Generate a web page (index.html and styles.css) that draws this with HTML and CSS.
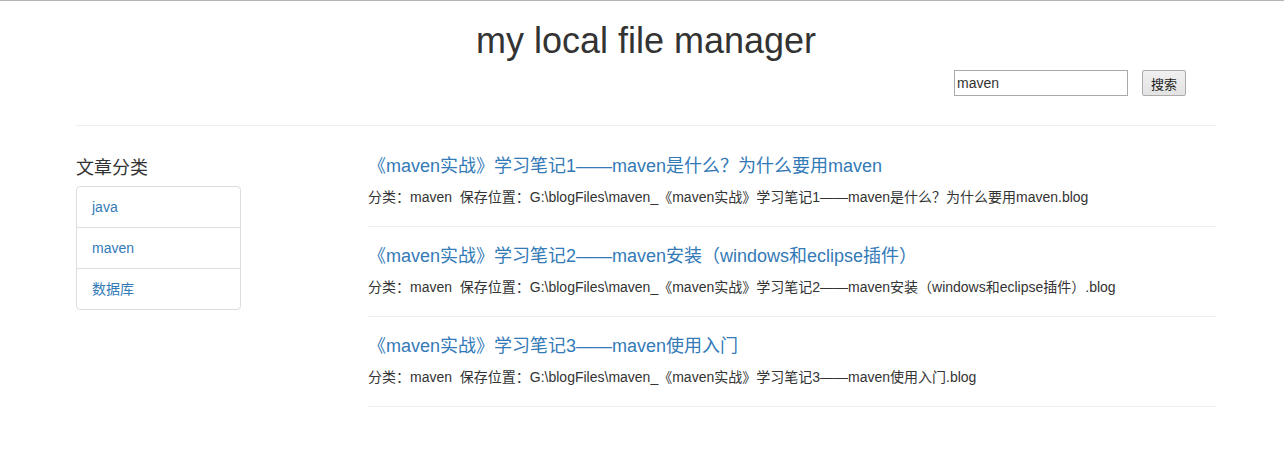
FILE: index.html
```html
<!DOCTYPE html>
<html lang="zh-CN">
<head>
<meta charset="utf-8">
<title>my local file manager</title>
<link rel="stylesheet" href="styles.css">
</head>
<body>
<div class="topline"></div>
<div class="container">
  <header class="header">
    <h1 class="site-title">my local file manager</h1>
    <form class="search">
      <input class="search-input" type="text" value="maven">
      <button class="search-btn" type="button">搜索</button>
    </form>
  </header>
  <hr class="divider">
  <div class="main">
    <aside class="sidebar">
      <h4 class="side-title">文章分类</h4>
      <ul class="list-group">
        <li class="list-item"><a href="#">java</a></li>
        <li class="list-item"><a href="#">maven</a></li>
        <li class="list-item"><a href="#">数据库</a></li>
      </ul>
    </aside>
    <section class="articles">
      <div class="article">
        <h4 class="article-title"><a href="#">《maven实战》学习笔记1——maven是什么？为什么要用maven</a></h4>
        <p class="meta">分类：maven&nbsp;&nbsp;保存位置：G:\blogFiles\maven_《maven实战》学习笔记1——maven是什么？为什么要用maven.blog</p>
      </div>
      <div class="article">
        <h4 class="article-title"><a href="#">《maven实战》学习笔记2——maven安装（windows和eclipse插件）</a></h4>
        <p class="meta">分类：maven&nbsp;&nbsp;保存位置：G:\blogFiles\maven_《maven实战》学习笔记2——maven安装（windows和eclipse插件）.blog</p>
      </div>
      <div class="article">
        <h4 class="article-title"><a href="#">《maven实战》学习笔记3——maven使用入门</a></h4>
        <p class="meta">分类：maven&nbsp;&nbsp;保存位置：G:\blogFiles\maven_《maven实战》学习笔记3——maven使用入门.blog</p>
      </div>
    </section>
  </div>
</div>
</body>
</html>
```

FILE: styles.css
```css
* { box-sizing: border-box; }
html, body {
  margin: 0;
  padding: 0;
  background: #fff;
}
body {
  font-family: "Liberation Sans", Arial, "Noto Sans CJK SC", sans-serif;
  font-size: 14px;
  line-height: 20px;
  color: #333;
}
a { color: #337ab7; text-decoration: none; }
.topline {
  height: 1px;
  background: #b4b4b4;
}
.container {
  width: 1140px;
  margin: 0 0 0 76px;
}
.header {
  display: flex;
  flex-direction: column;
}
.site-title {
  margin: 20px 0 9px;
  font-size: 36px;
  font-weight: 400;
  line-height: 40px;
  text-align: center;
  color: #333;
}
.search {
  display: flex;
  justify-content: flex-end;
  align-items: center;
  gap: 14px;
  padding-right: 30px;
  margin: 0;
}
.search-input {
  width: 174px;
  height: 26px;
  margin: 0;
  padding: 1px 2px;
  border: 1px solid #a9a9a9;
  border-radius: 0;
  font-family: "Liberation Sans", Arial, sans-serif;
  font-size: 14px;
  color: #333;
  background: #fff;
  outline: none;
}
.search-btn {
  width: 44px;
  height: 26px;
  margin: 0;
  padding: 0;
  border: 1px solid #acacac;
  border-radius: 2px;
  background: linear-gradient(#f0f0f0, #e3e3e3);
  font-family: "Noto Sans CJK SC", sans-serif;
  font-size: 13px;
  color: #222;
}
.divider {
  margin: 29px 0 0;
  border: 0;
  border-top: 1px solid #eee;
  height: 0;
}
.main {
  display: flex;
  padding-top: 11px;
}
.sidebar {
  width: 165px;
  margin-right: 127px;
  flex: none;
}
.side-title {
  margin: 19px 0 10px;
  font-size: 18px;
  font-weight: 400;
  line-height: 20px;
  color: #333;
  font-family: "Noto Sans CJK SC", sans-serif;
}
.list-group {
  list-style: none;
  margin: 0;
  padding: 0;
  border: 1px solid #ddd;
  border-radius: 4px;
}
.list-item {
  padding: 10px 15px;
  line-height: 20px;
  border-top: 1px solid #ddd;
}
.list-item:first-child { border-top: 0; }
.list-item a { color: #337ab7; font-size: 14px; }
.articles {
  width: 848px;
  flex: none;
}
.article {
  padding: 19px 0 19px;
  border-bottom: 1px solid #eee;
}
.article-title {
  margin: 0 0 11px;
  font-size: 18px;
  font-weight: 400;
  line-height: 20px;
}
.article-title a { color: #337ab7; }
.meta {
  margin: 0;
  font-size: 14px;
  line-height: 20px;
  color: #333;
}
```
